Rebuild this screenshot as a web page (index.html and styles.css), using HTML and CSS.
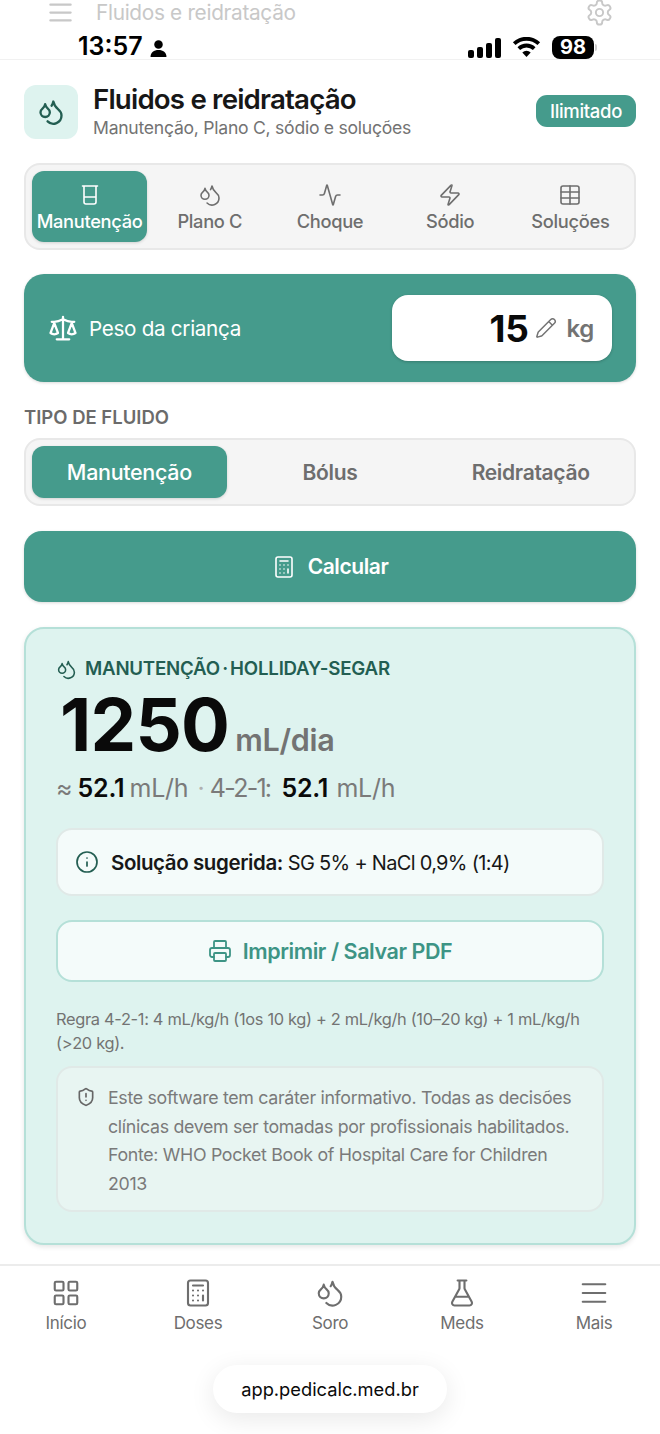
FILE: index.html
```html
<!DOCTYPE html>
<html lang="pt-BR">
<head>
  <meta charset="UTF-8">
  <meta name="viewport" content="width=device-width, initial-scale=1.0">
  <title>Fluidos e reidratação</title>
  <link rel="stylesheet" href="styles.css">
</head>
<body>
  <svg class="defs" width="0" height="0">
    <symbol id="i-drops" viewBox="0 0 24 24"><path d="M7 16.3c2.2 0 4-1.83 4-4.05 0-1.16-.57-2.26-1.71-3.19S7.29 6.75 7 5.3c-.29 1.45-1.14 2.84-2.29 3.76S3 11.1 3 12.25c0 2.22 1.8 4.05 4 4.05z"/><path d="M12.56 6.6A10.97 10.97 0 0 0 14 3.02c.5 2.5 2 4.9 4 6.5s3 3.5 3 5.5a6.98 6.98 0 0 1-11.91 4.97"/></symbol>
    <symbol id="i-calc" viewBox="0 0 24 24"><rect x="4" y="2" width="16" height="20" rx="2"/><path d="M8 6h8M16 14v4M16 10h.01M12 10h.01M8 10h.01M12 14h.01M8 14h.01M12 18h.01M8 18h.01"/></symbol>
  </svg>

  <div class="topbar">
    <svg class="ico top-menu" viewBox="0 0 24 24"><path d="M3 5h18M3 12h18M3 19h18"/></svg>
    <span class="top-title">Fluidos e reidratação</span>
    <svg class="ico top-gear" viewBox="0 0 24 24"><path d="M12.22 2h-.44a2 2 0 0 0-2 2v.18a2 2 0 0 1-1 1.73l-.43.25a2 2 0 0 1-2 0l-.15-.08a2 2 0 0 0-2.73.73l-.22.38a2 2 0 0 0 .73 2.73l.15.1a2 2 0 0 1 1 1.72v.51a2 2 0 0 1-1 1.74l-.15.09a2 2 0 0 0-.73 2.73l.22.38a2 2 0 0 0 2.73.73l.15-.08a2 2 0 0 1 2 0l.43.25a2 2 0 0 1 1 1.73V20a2 2 0 0 0 2 2h.44a2 2 0 0 0 2-2v-.18a2 2 0 0 1 1-1.73l.43-.25a2 2 0 0 1 2 0l.15.08a2 2 0 0 0 2.73-.73l.22-.39a2 2 0 0 0-.73-2.73l-.15-.08a2 2 0 0 1-1-1.74v-.5a2 2 0 0 1 1-1.74l.15-.09a2 2 0 0 0 .73-2.73l-.22-.38a2 2 0 0 0-2.73-.73l-.15.08a2 2 0 0 1-2 0l-.43-.25a2 2 0 0 1-1-1.73V4a2 2 0 0 0-2-2z"/><circle cx="12" cy="12" r="3"/></svg>
  </div>

  <div class="statusbar">
    <div class="status-left">
      <span class="clock">13:57</span>
      <svg class="person" viewBox="0 0 16 16"><circle cx="8" cy="4.2" r="4"/><path d="M0.5 16c0-4.4 3.2-6.6 7.5-6.6s7.5 2.2 7.5 6.6z"/></svg>
    </div>
    <div class="status-right">
      <div class="signal"><i></i><i></i><i></i><i></i></div>
      <svg class="wifi" viewBox="0 0 28 20"><path d="M14 20l-4.2-4.6a6 6 0 0 1 8.4 0z"/><path d="M7.6 13.1L5 10.3a12.8 12.8 0 0 1 18 0l-2.6 2.8a9 9 0 0 0-12.8 0z"/><path d="M3 8.1L.4 5.3a19.6 19.6 0 0 1 27.2 0L25 8.1a15.8 15.8 0 0 0-22 0z"/></svg>
      <div class="battery">98</div>
      <div class="battery-cap"></div>
    </div>
  </div>

  <main class="page">
    <header class="head">
      <div class="head-icon"><svg class="ico"><use href="#i-drops"/></svg></div>
      <div class="head-text">
        <h1>Fluidos e reidratação</h1>
        <p>Manutenção, Plano C, sódio e soluções</p>
      </div>
      <span class="badge">Ilimitado</span>
    </header>

    <nav class="tabs">
      <div class="tab active">
        <svg class="ico" viewBox="0 0 24 24"><path d="M4.5 3h15M6 3v16a2 2 0 0 0 2 2h8a2 2 0 0 0 2-2V3M6 14h12"/></svg>
        <span>Manutenção</span>
      </div>
      <div class="tab">
        <svg class="ico"><use href="#i-drops"/></svg>
        <span>Plano C</span>
      </div>
      <div class="tab">
        <svg class="ico" viewBox="0 0 24 24"><path d="M22 12h-2.48a2 2 0 0 0-1.93 1.46l-2.35 8.36a.25.25 0 0 1-.48 0L9.24 2.18a.25.25 0 0 0-.48 0l-2.35 8.36A2 2 0 0 1 4.49 12H2"/></svg>
        <span>Choque</span>
      </div>
      <div class="tab">
        <svg class="ico" viewBox="0 0 24 24"><path d="M4 14a1 1 0 0 1-.78-1.63l9.9-10.2a.5.5 0 0 1 .86.46l-1.92 6.02A1 1 0 0 0 13 10h7a1 1 0 0 1 .78 1.63l-9.9 10.2a.5.5 0 0 1-.86-.46l1.92-6.02A1 1 0 0 0 11 14z"/></svg>
        <span>Sódio</span>
      </div>
      <div class="tab">
        <svg class="ico" viewBox="0 0 24 24"><rect x="3" y="3" width="18" height="18" rx="2"/><path d="M12 3v18M3 9h18M3 15h18"/></svg>
        <span>Soluções</span>
      </div>
    </nav>

    <section class="weight">
      <svg class="ico weight-icon" viewBox="0 0 24 24"><path d="M16 16l3-8 3 8c-.87.65-1.92 1-3 1s-2.13-.35-3-1ZM2 16l3-8 3 8c-.87.65-1.92 1-3 1s-2.13-.35-3-1ZM7 21h10M12 3v18M3 7h2c2 0 5-1 7-2 2 1 5 2 7 2h2"/></svg>
      <span class="weight-label">Peso da criança</span>
      <div class="weight-input">
        <span class="weight-value">15</span>
        <svg class="ico pencil" viewBox="0 0 24 24"><path d="M21.174 6.812a1 1 0 0 0-3.986-3.987L3.842 16.174a2 2 0 0 0-.5.83l-1.321 4.352a.5.5 0 0 0 .623.622l4.353-1.32a2 2 0 0 0 .83-.497zM15 5l4 4"/></svg>
        <span class="weight-unit">kg</span>
      </div>
    </section>

    <div class="section-label">TIPO DE FLUIDO</div>
    <div class="segment">
      <div class="seg active">Manutenção</div>
      <div class="seg">Bólus</div>
      <div class="seg">Reidratação</div>
    </div>

    <button class="calc"><svg class="ico"><use href="#i-calc"/></svg>Calcular</button>

    <section class="result">
      <div class="result-tag"><svg class="ico"><use href="#i-drops"/></svg>MANUTENÇÃO · HOLLIDAY-SEGAR</div>
      <div class="result-main"><strong>1250</strong><span>mL/dia</span></div>
      <div class="result-sub">≈ <b>52.1</b> mL/h <em>·</em> <i>4-2-1:</i> <b class="second">52.1</b> mL/h</div>
      <div class="suggest">
        <svg class="ico" viewBox="0 0 24 24"><circle cx="12" cy="12" r="10"/><path d="M12 16v-4M12 8h.01"/></svg>
        <p><b>Solução sugerida:</b> SG 5% + NaCl 0,9% (1:4)</p>
      </div>
      <button class="print">
        <svg class="ico" viewBox="0 0 24 24"><path d="M6 18H4a2 2 0 0 1-2-2v-5a2 2 0 0 1 2-2h16a2 2 0 0 1 2 2v5a2 2 0 0 1-2 2h-2"/><path d="M6 9V3a1 1 0 0 1 1-1h10a1 1 0 0 1 1 1v6"/><rect x="6" y="14" width="12" height="8" rx="1"/></svg>
        Imprimir / Salvar PDF
      </button>
      <p class="rule">Regra 4-2-1: 4 mL/kg/h (1os 10 kg) + 2 mL/kg/h (10–20 kg) + 1 mL/kg/h (&gt;20 kg).</p>
      <div class="disclaimer">
        <svg class="ico" viewBox="0 0 24 24"><path d="M20 13c0 5-3.5 7.5-7.66 8.95a1 1 0 0 1-.67-.01C7.5 20.5 4 18 4 13V6a1 1 0 0 1 1-1c2 0 4.5-1.2 6.24-2.72a1.17 1.17 0 0 1 1.52 0C14.51 3.81 17 5 19 5a1 1 0 0 1 1 1zM12 8v4M12 16h.01"/></svg>
        <p>Este software tem caráter informativo. Todas as decisões clínicas devem ser tomadas por profissionais habilitados. Fonte: WHO Pocket Book of Hospital Care for Children 2013</p>
      </div>
    </section>
  </main>

  <nav class="bottom">
    <div class="bottom-item">
      <svg class="ico" viewBox="0 0 24 24"><rect x="3" y="3" width="7" height="7" rx="1"/><rect x="14" y="3" width="7" height="7" rx="1"/><rect x="14" y="14" width="7" height="7" rx="1"/><rect x="3" y="14" width="7" height="7" rx="1"/></svg>
      <span>Início</span>
    </div>
    <div class="bottom-item"><svg class="ico"><use href="#i-calc"/></svg><span>Doses</span></div>
    <div class="bottom-item"><svg class="ico"><use href="#i-drops"/></svg><span>Soro</span></div>
    <div class="bottom-item">
      <svg class="ico" viewBox="0 0 24 24"><path d="M14 2v6a2 2 0 0 0 .245.96l5.51 10.08A2 2 0 0 1 18 22H6a2 2 0 0 1-1.755-2.96l5.51-10.08A2 2 0 0 0 10 8V2M6.453 15h11.094M8.5 2h7"/></svg>
      <span>Meds</span>
    </div>
    <div class="bottom-item">
      <svg class="ico" viewBox="0 0 24 24"><path d="M3 5h18M3 12h18M3 19h18"/></svg>
      <span>Mais</span>
    </div>
  </nav>

  <div class="url-row"><div class="url">app.pedicalc.med.br</div></div>
</body>
</html>
```

FILE: styles.css
```css
* {
  box-sizing: border-box;
}
body {
  margin: 0;
  height: 1434px;
  overflow: hidden;
  background: #fff;
  font-family: 'Inter', 'Liberation Sans', sans-serif;
  color: #171717;
  letter-spacing: -0.02em;
}
p, h1 {
  margin: 0;
}
.defs {
  position: absolute;
}
.ico {
  fill: none;
  stroke: currentColor;
  stroke-width: 2;
  stroke-linecap: round;
  stroke-linejoin: round;
  flex: none;
}

/* header borrado e barra de status */
.topbar {
  height: 25px;
  display: flex;
  align-items: center;
  padding: 0 46px 0 47px;
  color: #c8c8c8;
}
.top-menu {
  width: 27px;
  height: 27px;
}
.top-title {
  margin-left: 22px;
  font-size: 20.8px;
  flex: 1;
}
.top-gear {
  width: 29px;
  height: 29px;
  stroke-width: 1.6;
}
.statusbar {
  height: 35px;
  display: flex;
  justify-content: space-between;
  padding: 9px 63px 0 78px;
  border-bottom: 1px solid #f1f1f1;
  color: #000;
}
.status-left, .status-right {
  display: flex;
  align-items: flex-start;
}
.clock {
  font-size: 25px;
  font-weight: 600;
  line-height: 25px;
  letter-spacing: 0;
}
.person {
  width: 17px;
  height: 17px;
  margin: 6px 0 0 7px;
  fill: #000;
}
.signal {
  display: flex;
  align-items: flex-end;
  gap: 3px;
  height: 20px;
  margin-top: 4px;
}
.signal i {
  width: 6px;
  background: #000;
  border-radius: 2px;
}
.signal i:nth-child(1) { height: 8px; }
.signal i:nth-child(2) { height: 11px; }
.signal i:nth-child(3) { height: 15px; }
.signal i:nth-child(4) { height: 20px; }
.wifi {
  width: 29px;
  height: 20px;
  margin: 3px 0 0 11px;
  fill: #000;
}
.battery {
  width: 42px;
  height: 23px;
  margin: 2px 0 0 11px;
  background: #000;
  color: #fff;
  border-radius: 8px;
  font-size: 20px;
  font-weight: 700;
  line-height: 23px;
  text-align: center;
  letter-spacing: 0;
}
.battery-cap {
  width: 2px;
  height: 7px;
  margin: 10px 0 0 1px;
  background: #ccc;
  border-radius: 0 2px 2px 0;
}

/* conteudo */
.page {
  padding: 25px 24px 0;
}
.head {
  display: flex;
  align-items: center;
  height: 54px;
}
.head-icon {
  width: 54px;
  height: 54px;
  border-radius: 12px;
  background: #def3ef;
  color: #235e52;
  display: flex;
  align-items: center;
  justify-content: center;
}
.head-icon svg {
  width: 28px;
  height: 28px;
}
.head-text {
  margin-left: 15px;
  flex: 1;
  padding-top: 2px;
}
.head-text h1 {
  font-size: 27.7px;
  font-weight: 600;
  line-height: 30px;
  letter-spacing: -0.03em;
}
.head-text p {
  font-size: 17.6px;
  line-height: 28px;
  letter-spacing: -0.015em;
  color: #737373;
}
.badge {
  width: 100px;
  height: 32px;
  background: #459b8c;
  color: #fff;
  font-size: 18.5px;
  font-weight: 500;
  line-height: 32px;
  text-align: center;
  border-radius: 11px;
  margin-top: -2px;
}
.tabs {
  margin-top: 24px;
  height: 87px;
  padding: 6px;
  display: grid;
  grid-template-columns: repeat(5, 1fr);
  gap: 5px;
  background: #f5f5f5;
  border: 2px solid #e8e8e8;
  border-radius: 16px;
}
.tab {
  display: flex;
  flex-direction: column;
  align-items: center;
  justify-content: center;
  gap: 3px;
  padding-top: 1px;
  color: #6e6e6e;
  font-size: 18.3px;
  font-weight: 500;
  border-radius: 12px;
  white-space: nowrap;
}
.tab svg {
  width: 24px;
  height: 24px;
  stroke-width: 1.6;
}
.tab.active {
  background: #459b8c;
  color: #fff;
  box-shadow: 0 1px 3px rgba(0, 0, 0, 0.15);
}
.weight {
  margin-top: 24px;
  height: 108px;
  background: #459b8c;
  border-radius: 20px;
  box-shadow: 0 1px 3px rgba(0, 0, 0, 0.15);
  display: flex;
  align-items: center;
  padding: 0 24px;
  color: #fff;
}
.weight-icon {
  width: 30px;
  height: 30px;
  stroke-width: 1.8;
}
.weight-label {
  margin-left: 11px;
  font-size: 20.7px;
  flex: 1;
}
.weight-input {
  width: 220px;
  height: 66px;
  background: #fff;
  border-radius: 16px;
  box-shadow: 0 1px 3px rgba(0, 0, 0, 0.2);
  display: flex;
  align-items: center;
  justify-content: flex-end;
  padding-right: 18px;
  color: #737373;
}
.weight-value {
  font-size: 37px;
  font-weight: 700;
  color: #0a0a0a;
  margin-right: 6px;
}
.pencil {
  width: 22px;
  height: 22px;
  stroke-width: 1.6;
  margin-right: 10px;
}
.weight-unit {
  font-size: 24px;
  font-weight: 600;
}
.section-label {
  margin-top: 23px;
  font-size: 18.5px;
  font-weight: 600;
  line-height: 24px;
  color: #6b6b6b;
  letter-spacing: 0;
}
.segment {
  margin-top: 9px;
  height: 68px;
  padding: 6px;
  display: grid;
  grid-template-columns: repeat(3, 1fr);
  gap: 6px;
  background: #f5f5f5;
  border: 2px solid #e8e8e8;
  border-radius: 16px;
}
.seg {
  display: flex;
  align-items: center;
  justify-content: center;
  color: #6e6e6e;
  font-size: 21px;
  font-weight: 600;
  border-radius: 12px;
}
.seg.active {
  background: #459b8c;
  color: #fff;
  font-size: 21.5px;
  font-weight: 500;
  box-shadow: 0 1px 3px rgba(0, 0, 0, 0.15);
}
.calc {
  margin-top: 25px;
  width: 100%;
  height: 71px;
  background: #459b8c;
  color: #fff;
  border: none;
  border-radius: 18px;
  box-shadow: 0 1px 3px rgba(0, 0, 0, 0.15);
  font: 600 21px 'Inter', sans-serif;
  letter-spacing: -0.02em;
  display: flex;
  align-items: center;
  justify-content: center;
  gap: 12px;
}
.calc svg {
  width: 24px;
  height: 24px;
  stroke-width: 1.6;
}

/* resultado */
.result {
  margin-top: 25px;
  height: 618px;
  background: #def3ef;
  border: 2px solid #b5e0d8;
  border-radius: 20px;
  box-shadow: 0 2px 5px rgba(0, 0, 0, 0.1);
  padding: 28px 30px 0;
}
.result-tag {
  display: flex;
  align-items: center;
  gap: 8px;
  color: #235e52;
  font-size: 18.7px;
  font-weight: 600;
  line-height: 24px;
  letter-spacing: -0.012em;
  word-spacing: -0.12em;
}
.result-tag svg {
  width: 21px;
  height: 21px;
  stroke-width: 1.8;
}
.result-main {
  display: flex;
  align-items: baseline;
  margin: 8px 0 0 4px;
  height: 72px;
  line-height: 72px;
}
.result-main strong {
  font-size: 72.5px;
  font-weight: 700;
  color: #0a0a0a;
  letter-spacing: -0.01em;
}
.result-main span {
  margin-left: 6px;
  font-size: 30.6px;
  font-weight: 600;
  color: #737373;
}
.result-sub {
  margin-top: 10px;
  font-size: 25px;
  line-height: 34px;
  color: #7a7a7a;
  white-space: nowrap;
  letter-spacing: -0.01em;
  word-spacing: -0.06em;
}
.result-sub b {
  font-weight: 600;
  color: #0a0a0a;
}
.result-sub em {
  font-style: normal;
  color: #b0b0b0;
  margin-left: 4px;
}
.result-sub i {
  font-style: normal;
  letter-spacing: -0.07em;
}
.result-sub .second {
  margin: 0 3px 0 6px;
}
.suggest {
  margin-top: 23px;
  height: 68px;
  background: #f4fbfa;
  border: 2px solid #e0e9e7;
  border-radius: 16px;
  display: flex;
  align-items: center;
  padding: 0 17px;
  gap: 12px;
  font-size: 20px;
  letter-spacing: -0.035em;
  color: #171717;
}
.suggest svg {
  width: 24px;
  height: 24px;
  color: #235e52;
  stroke-width: 1.7;
}
.suggest b {
  font-size: 20.5px;
  font-weight: 600;
  letter-spacing: -0.02em;
}
.print {
  margin-top: 24px;
  width: 100%;
  height: 62px;
  background: #f4fbfa;
  border: 2px solid #b5e0d8;
  border-radius: 16px;
  color: #3d9485;
  font: 600 21.5px 'Inter', sans-serif;
  letter-spacing: -0.02em;
  display: flex;
  align-items: center;
  justify-content: center;
  gap: 11px;
}
.print svg {
  width: 24px;
  height: 24px;
  stroke-width: 1.8;
}
.rule {
  margin-top: 25px;
  font-size: 16.4px;
  line-height: 24px;
  color: #737373;
}
.disclaimer {
  margin-top: 11px;
  height: 146px;
  background: #e8f5f2;
  border: 2px solid #e0e9e7;
  border-radius: 16px;
  padding: 16px 18px 0;
  display: flex;
  gap: 12px;
  font-size: 17.8px;
  line-height: 28.5px;
  color: #7a7a7a;
}
.disclaimer svg {
  width: 20px;
  height: 20px;
  margin-top: 3px;
  color: #666;
}

/* navegacao inferior */
.bottom {
  position: absolute;
  top: 1264px;
  left: 0;
  right: 0;
  height: 70px;
  border-top: 2px solid #ececec;
  display: grid;
  grid-template-columns: repeat(5, 1fr);
  background: #fff;
}
.bottom-item {
  display: flex;
  flex-direction: column;
  align-items: center;
  padding-top: 12px;
  color: #6e6e6e;
  font-size: 17px;
}
.bottom-item svg {
  width: 30px;
  height: 30px;
  stroke-width: 1.7;
  margin-bottom: 5px;
}
.url-row {
  position: absolute;
  top: 1365px;
  left: 0;
  right: 0;
  display: flex;
  justify-content: center;
}
.url {
  width: 234px;
  height: 48px;
  border-radius: 24px;
  background: #fff;
  box-shadow: 0 6px 26px rgba(0, 0, 0, 0.09);
  font-size: 18.3px;
  line-height: 48px;
  text-align: center;
  color: #0a0a0a;
  letter-spacing: 0;
}
```
